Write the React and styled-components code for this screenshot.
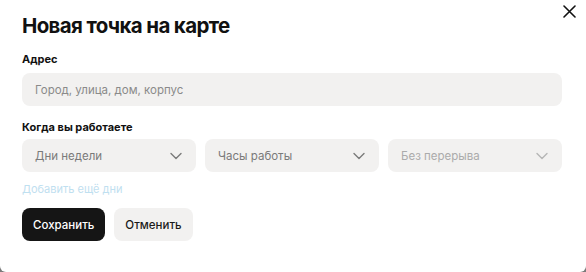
import React from 'react';
import styled, { createGlobalStyle } from 'styled-components';

const Global = createGlobalStyle`
  html, body {
    margin: 0;
    padding: 0;
    background: #7a7a7a;
  }
  body {
    font-family: Inter, "Noto Sans", sans-serif;
    -webkit-font-smoothing: antialiased;
  }
`;

const Modal = styled.div`
  position: relative;
  box-sizing: border-box;
  width: 586px;
  height: 272px;
  background: #fff;
  border-radius: 0 0 6px 6px;
  padding: 12px 24px 0 22px;
  display: flex;
  flex-direction: column;
`;

const Close = styled.button`
  position: absolute;
  top: 3px;
  right: 9px;
  width: 16px;
  height: 16px;
  padding: 0;
  border: none;
  background: none;
  display: flex;
  align-items: center;
  justify-content: center;
  cursor: pointer;
`;

const Title = styled.h1`
  margin: 0;
  font-size: 20.5px;
  font-weight: 700;
  letter-spacing: -0.65px;
  color: #111;
  line-height: 28px;
`;

const Label = styled.div`
  margin-top: ${p => p.$top}px;
  font-size: 11px;
  font-weight: 700;
  color: #111;
  line-height: 14px;
`;

const Field = styled.div`
  margin-top: 7px;
  height: 33px;
  box-sizing: border-box;
  background: #f2f1f0;
  border-radius: 8px;
  padding: 0 13px;
  display: flex;
  align-items: center;
  font-size: 11.5px;
  color: #8a8a8a;
`;

const Row = styled.div`
  margin-top: 5px;
  display: grid;
  grid-template-columns: repeat(3, 1fr);
  gap: 9px;
`;

const Select = styled.div`
  height: 33px;
  box-sizing: border-box;
  background: #f2f1f0;
  border-radius: 8px;
  padding: 0 14px 0 13px;
  display: flex;
  align-items: center;
  justify-content: space-between;
  font-size: 11.5px;
  color: ${p => (p.$muted ? '#ababab' : '#7a7a7a')};
`;

const AddLink = styled.a`
  margin-top: 10px;
  font-size: 11px;
  color: #bfe0f0;
  line-height: 14px;
  text-decoration: none;
`;

const Actions = styled.div`
  margin-top: 12px;
  display: flex;
  gap: 9px;
`;

const Button = styled.button`
  height: 33px;
  padding: 0 11px;
  border: none;
  border-radius: 8px;
  font-family: inherit;
  font-size: 11.5px;
  font-weight: 500;
  background: ${p => (p.$primary ? '#151515' : '#f2f1f0')};
  color: ${p => (p.$primary ? '#fff' : '#1a1a1a')};
`;

const Chevron = ({ color }) => (
  <svg width="12" height="8" viewBox="0 0 12 8" fill="none">
    <path d="M1 1.5L6 6.5L11 1.5" stroke={color} strokeWidth="1.4" strokeLinecap="round" strokeLinejoin="round" />
  </svg>
);

export default function App() {
  return (
    <>
      <Global />
      <Modal>
        <Close aria-label="close">
          <svg width="13" height="13" viewBox="0 0 13 13">
            <path d="M1 1L12 12M12 1L1 12" stroke="#111" strokeWidth="1.6" strokeLinecap="round" />
          </svg>
        </Close>
        <Title>Новая точка на карте</Title>
        <Label $top={12}>Адрес</Label>
        <Field>Город, улица, дом, корпус</Field>
        <Label $top={14}>Когда вы работаете</Label>
        <Row>
          <Select>
            Дни недели
            <Chevron color="#7a7a7a" />
          </Select>
          <Select>
            Часы работы
            <Chevron color="#7a7a7a" />
          </Select>
          <Select $muted>
            Без перерыва
            <Chevron color="#b5b5b5" />
          </Select>
        </Row>
        <AddLink>Добавить ещё дни</AddLink>
        <Actions>
          <Button $primary>Сохранить</Button>
          <Button>Отменить</Button>
        </Actions>
      </Modal>
    </>
  );
}
